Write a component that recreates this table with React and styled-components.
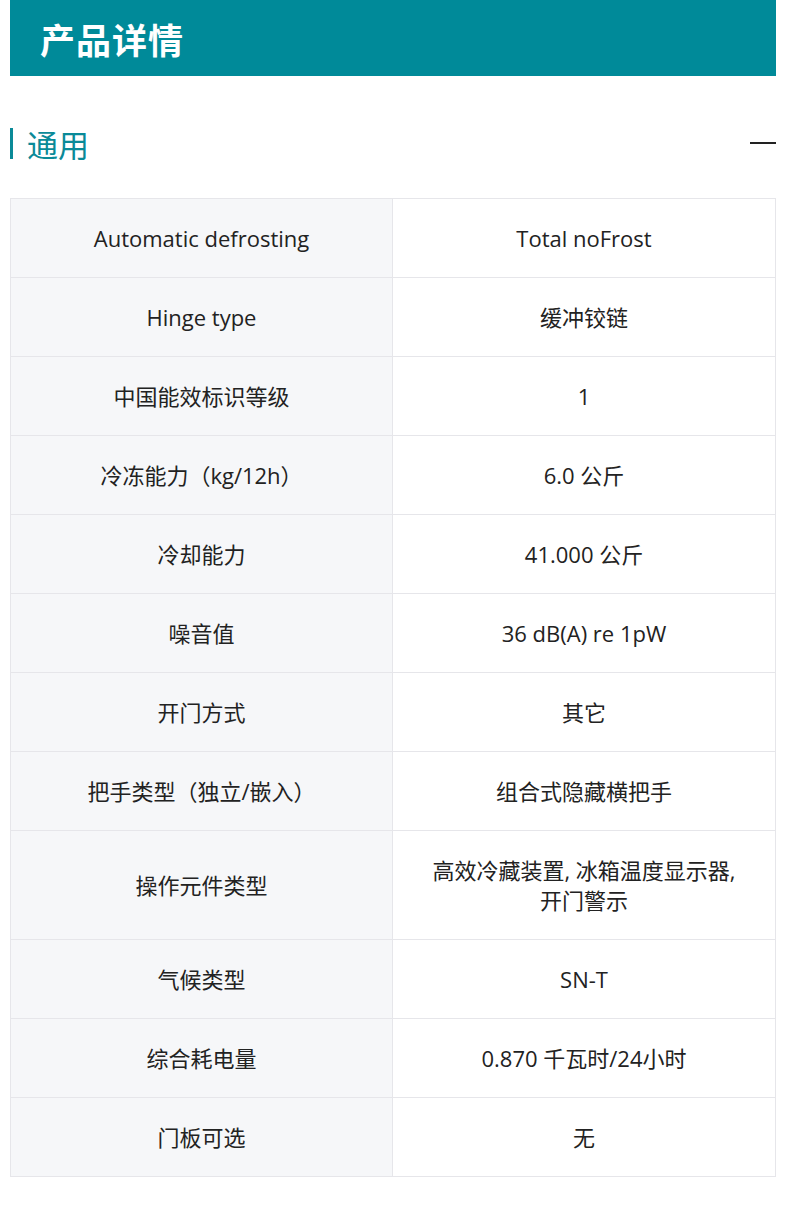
import React from "react";
import styled, { createGlobalStyle } from "styled-components";

const Global = createGlobalStyle`
  html, body { margin: 0; padding: 0; background: #ffffff; }
  body { font-family: "Open Sans", "Noto Sans CJK SC", sans-serif; }
`;

const Page = styled.div`
  width: 766px;
  margin-left: 10px;
  padding-bottom: 42px;
`;

const Banner = styled.header`
  height: 76px;
  background: #008a99;
  display: flex;
  align-items: center;
  padding-left: 30px;
`;

const BannerTitle = styled.h1`
  margin: 0;
  color: #ffffff;
  font-family: "Noto Sans CJK SC", sans-serif;
  font-weight: 700;
  font-size: 35px;
  letter-spacing: 1px;
  line-height: 1;
`;

const SectionHead = styled.div`
  display: flex;
  align-items: center;
  justify-content: space-between;
  height: 60px;
  margin-top: 37px;
  margin-bottom: 25px;
`;

const SectionTitle = styled.h2`
  margin: 0;
  display: flex;
  align-items: center;
  gap: 14px;
  color: #0a8a98;
  font-family: "Noto Sans CJK SC", sans-serif;
  font-weight: 400;
  font-size: 31px;
  line-height: 1;
  &::before {
    content: "";
    width: 3px;
    height: 31px;
    background: #0a8a98;
  }
`;

const Collapse = styled.span`
  width: 26px;
  height: 2px;
  background: #222;
`;

const Table = styled.div`
  display: grid;
  grid-template-columns: 382px 1fr;
  border-top: 1px solid #e6e6ea;
  border-left: 1px solid #e6e6ea;
`;

const Cell = styled.div`
  display: flex;
  align-items: center;
  justify-content: center;
  text-align: center;
  padding: 24px 20px;
  min-height: 30px;
  font-size: 22px;
  line-height: 30px;
  color: #222;
  word-break: keep-all;
  background: ${(p) => (p.$label ? "#f6f7f9" : "#ffffff")};
  border-right: 1px solid #e6e6ea;
  border-bottom: 1px solid #e6e6ea;
`;

const rows = [
  ["Automatic defrosting", "Total noFrost"],
  ["Hinge type", "缓冲铰链"],
  ["中国能效标识等级", "1"],
  ["冷冻能力（kg/12h）", "6.0 公斤"],
  ["冷却能力", "41.000 公斤"],
  ["噪音值", "36 dB(A) re 1pW"],
  ["开门方式", "其它"],
  ["把手类型（独立/嵌入）", "组合式隐藏横把手"],
  ["操作元件类型", "高效冷藏装置, 冰箱温度显示器, 开门警示"],
  ["气候类型", "SN-T"],
  ["综合耗电量", "0.870 千瓦时/24小时"],
  ["门板可选", "无"],
];

export default function App() {
  return (
    <>
      <Global />
      <Page>
        <Banner>
          <BannerTitle>产品详情</BannerTitle>
        </Banner>
        <SectionHead>
          <SectionTitle>通用</SectionTitle>
          <Collapse />
        </SectionHead>
        <Table>
          {rows.map(([k, v]) => (
            <React.Fragment key={k}>
              <Cell $label>{k}</Cell>
              <Cell>{v}</Cell>
            </React.Fragment>
          ))}
        </Table>
      </Page>
    </>
  );
}
